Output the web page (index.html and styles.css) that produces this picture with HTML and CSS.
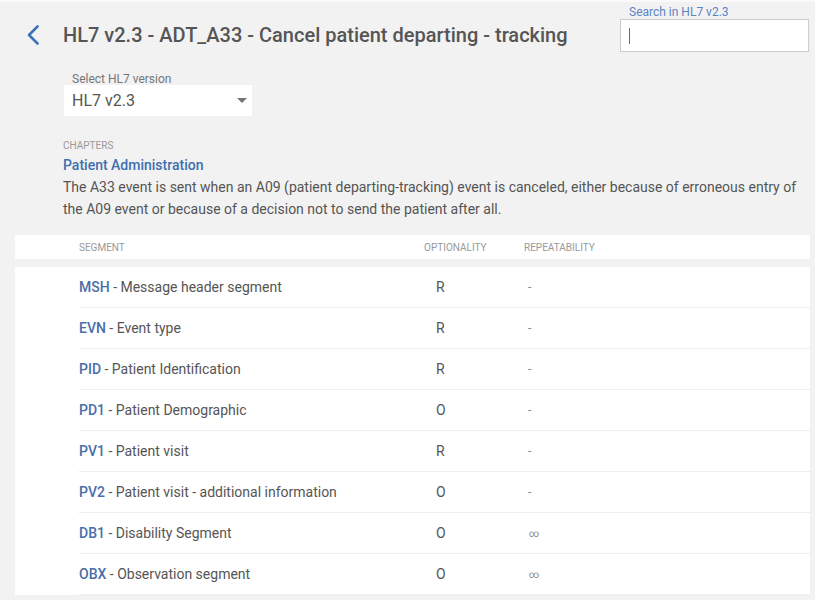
FILE: index.html
```html
<!DOCTYPE html>
<html>
<head>
<meta charset="utf-8">
<link rel="stylesheet" href="styles.css">
</head>
<body>
<div class="page">
  <header class="top">
    <div class="title-group">
      <a class="back" href="#"><svg width="12" height="20" viewBox="0 0 12 20"><path d="M10.5 1.5 L2 10 L10.5 18.5" fill="none" stroke="#3d72b8" stroke-width="2.6" stroke-linecap="round" stroke-linejoin="round"/></svg></a>
      <h1 class="title">HL7 v2.3 - ADT_A33 - Cancel patient departing - tracking</h1>
    </div>
    <div class="search">
      <label class="search-label">Search in HL7 v2.3</label>
      <div class="search-input"><span class="caret"></span></div>
    </div>
  </header>

  <div class="version">
    <div class="version-label">Select HL7 version</div>
    <div class="select"><span>HL7 v2.3</span><span class="arrow"></span></div>
  </div>

  <section class="chapter">
    <div class="chapters-label">CHAPTERS</div>
    <div class="chapter-name">Patient Administration</div>
    <p class="desc">The A33 event is sent when an A09 (patient departing-tracking) event is canceled, either because of erroneous entry of the A09 event or because of a decision not to send the patient after all.</p>
  </section>

  <div class="thead">
    <div class="c-seg">SEGMENT</div>
    <div class="c-opt">OPTIONALITY</div>
    <div class="c-rep">REPEATABILITY</div>
  </div>

  <div class="tbody">
    <div class="row"><div class="c-seg"><b>MSH</b> - Message header segment</div><div class="c-opt v">R</div><div class="c-rep v">-</div></div>
    <div class="row"><div class="c-seg"><b>EVN</b> - Event type</div><div class="c-opt v">R</div><div class="c-rep v">-</div></div>
    <div class="row"><div class="c-seg"><b>PID</b> - Patient Identification</div><div class="c-opt v">R</div><div class="c-rep v">-</div></div>
    <div class="row"><div class="c-seg"><b>PD1</b> - Patient Demographic</div><div class="c-opt v">O</div><div class="c-rep v">-</div></div>
    <div class="row"><div class="c-seg"><b>PV1</b> - Patient visit</div><div class="c-opt v">R</div><div class="c-rep v">-</div></div>
    <div class="row"><div class="c-seg"><b>PV2</b> - Patient visit - additional information</div><div class="c-opt v">O</div><div class="c-rep v">-</div></div>
    <div class="row"><div class="c-seg"><b>DB1</b> - Disability Segment</div><div class="c-opt v">O</div><div class="c-rep v inf">∞</div></div>
    <div class="row"><div class="c-seg"><b>OBX</b> - Observation segment</div><div class="c-opt v">O</div><div class="c-rep v inf">∞</div></div>
  </div>
</div>
</body>
</html>
```

FILE: styles.css
```css
* { box-sizing: border-box; }
html, body { margin: 0; padding: 0; }
body {
  background: #f2f2f2;
  font-family: Roboto, "Liberation Sans", sans-serif;
  color: #555;
  border-top: 2px solid #fafafa;
}
.page { width: 815px; }

.top {
  display: flex;
  align-items: flex-start;
  padding: 0 6px 0 27px;
}
.title-group {
  display: flex;
  align-items: center;
  margin-top: 21px;
}
.back { display: block; width: 12px; height: 20px; margin-right: 24px; }
.back svg { display: block; }
.title {
  margin: 0;
  font-size: 20px;
  line-height: 24px;
  font-weight: 500;
  color: #555;
}
.search {
  margin-left: auto;
  width: 189px;
}
.search-label {
  display: block;
  font-size: 12px;
  line-height: 14px;
  color: #5b84c4;
  padding-left: 9px;
  margin-top: 3px;
}
.search-input {
  margin-top: 0;
  height: 33px;
  background: #fff;
  border: 1px solid #ccc;
  padding: 8px 0 0 8px;
}
.caret { display: block; width: 1px; height: 16px; background: #4a6ea9; }

.version { padding-left: 64px; margin-top: 20px; }
.version-label {
  font-size: 12px;
  line-height: 14px;
  color: #777;
  padding-left: 8px;
}
.select {
  width: 188px;
  height: 31px;
  background: #fff;
  margin-top: -1px;
  display: flex;
  align-items: center;
  justify-content: space-between;
  padding: 0 5px 0 8px;
  font-size: 16px;
  color: #555;
}
.arrow {
  width: 0; height: 0;
  border-left: 5px solid transparent;
  border-right: 5px solid transparent;
  border-top: 5px solid #757575;
}

.chapter { padding-left: 63px; padding-right: 12px; margin-top: 24px; }
.chapters-label {
  font-size: 10px;
  line-height: 12px;
  color: #999;
}
.chapter-name {
  margin-top: 3px;
  font-size: 14px;
  line-height: 20px;
  font-weight: 500;
  color: #3f6fae;
}
.desc {
  margin: 1px 0 0;
  font-size: 14px;
  line-height: 22px;
  color: #555;
}

.thead {
  margin: 15px 5px 0 15px;
  height: 24px;
  background: #fff;
  display: flex;
  align-items: center;
  font-size: 10px;
  color: #999;
}
.c-seg { width: 409px; padding-left: 64px; }
.c-opt { width: 100px; }
.c-rep { flex: 1; }

.tbody {
  margin: 8px 5px 0 15px;
  background: #fff;
}
.row {
  display: flex;
  align-items: center;
  height: 41px;
  margin-left: 64px;
  border-bottom: 1px solid #eee;
  font-size: 14px;
  color: #555;
}
.row .c-seg { width: 345px; padding-left: 0; }
.row b { font-weight: 500; color: #4a6ea9; }
.row .c-opt { padding-left: 12px; }
.row .c-rep { padding-left: 4px; font-size: 12px; color: #888; }
.row .c-rep.inf { font-size: 10px; padding-left: 5px; }
```
